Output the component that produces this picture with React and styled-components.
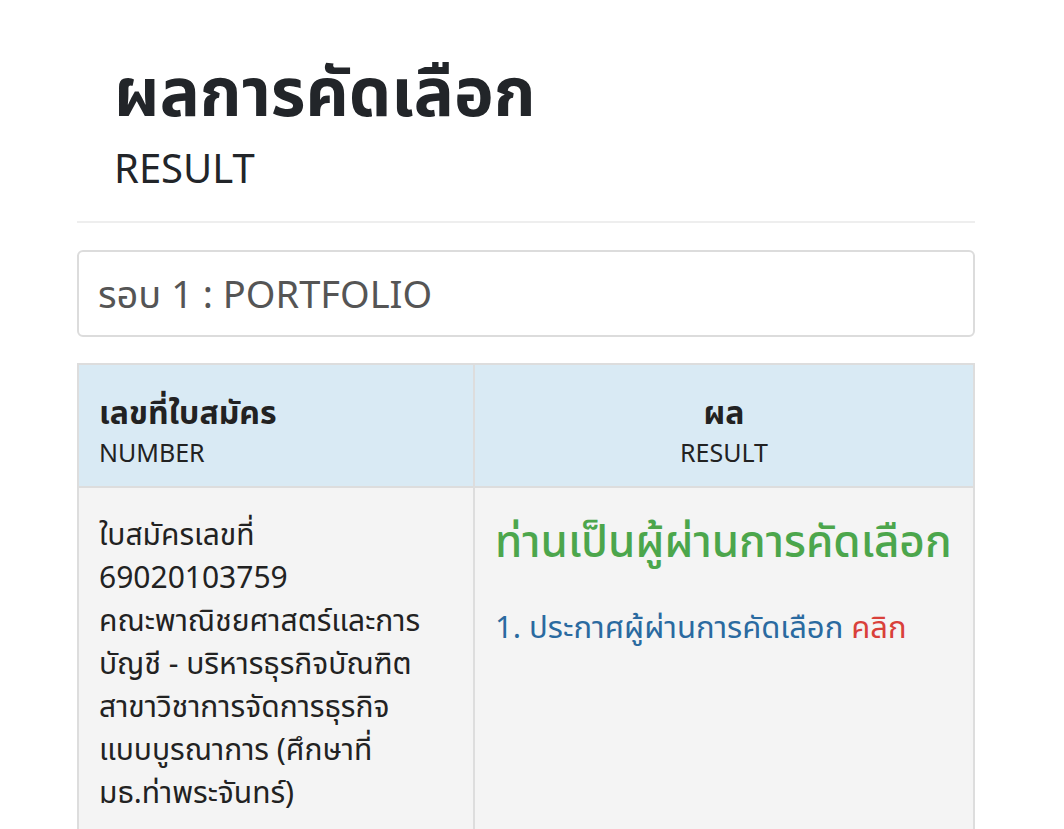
import React from 'react';
import styled, { createGlobalStyle } from 'styled-components';

const GlobalStyle = createGlobalStyle`
  html, body {
    margin: 0;
    padding: 0;
    background: #fff;
  }
  body {
    font-family: "Noto Sans", "Noto Sans Thai", "Noto Sans CJK SC", sans-serif;
    color: #333;
  }
`;

const Page = styled.div`
  width: 898px;
  padding: 0 0 0 77px;
`;

const PageHeader = styled.div`
  padding: 50px 0 29px 37px;
  border-bottom: 2px solid #eee;
  margin-bottom: 27px;
`;

const Title = styled.h1`
  margin: 0;
  font-size: 67px;
  line-height: 1.2;
  font-weight: 700;
  color: #222529;
`;

const Subtitle = styled.div`
  margin-top: 14px;
  font-size: 40px;
  line-height: 1.2;
  color: #222529;
`;

const RoundPanel = styled.div`
  border: 2px solid #dcdcdc;
  border-radius: 6px;
  padding: 19px 19px 18px;
  font-size: 38px;
  line-height: 1.2;
  color: #555;
  margin-bottom: 26px;
`;

const Table = styled.table`
  width: 100%;
  table-layout: fixed;
  border-collapse: collapse;
  border: 2px solid #ddd;
  font-size: 30px;
  line-height: 43px;
`;

const HeadCell = styled.th`
  background: #d9eaf4;
  border: 2px solid #ddd;
  padding: 26px 20px 15px;
  font-weight: 400;
  text-align: ${(p) => p.$align || 'left'};
  vertical-align: top;
`;

const HeadThai = styled.div`
  font-weight: 700;
  font-size: 32px;
  line-height: 42px;
  color: #222;
`;

const HeadEng = styled.div`
  font-size: 25px;
  line-height: 38px;
  color: #222;
`;

const BodyCell = styled.td`
  background: #f4f4f4;
  border: 2px solid #ddd;
  padding: 24px 20px 40px;
  vertical-align: top;
  color: #222;
`;

const Line = styled.span`
  display: block;
  white-space: nowrap;
`;

const Passed = styled.div`
  color: #4ca64c;
  font-size: 44px;
  font-weight: 500;
  line-height: 54px;
  margin: 1px 0 38px;
  white-space: nowrap;
`;

const NoticeLink = styled.a`
  color: #2a6aa0;
  text-decoration: none;
  font-size: 31px;
`;

const ClickLink = styled.span`
  color: #d9403a;
`;

export default function App() {
  return (
    <>
      <GlobalStyle />
      <Page>
        <PageHeader>
          <Title>ผลการคัดเลือก</Title>
          <Subtitle>RESULT</Subtitle>
        </PageHeader>

        <RoundPanel>รอบ 1 : PORTFOLIO</RoundPanel>

        <Table>
          <colgroup>
            <col style={{ width: 396 }} />
            <col />
          </colgroup>
          <thead>
            <tr>
              <HeadCell>
                <HeadThai>เลขที่ใบสมัคร</HeadThai>
                <HeadEng>NUMBER</HeadEng>
              </HeadCell>
              <HeadCell $align="center">
                <HeadThai>ผล</HeadThai>
                <HeadEng>RESULT</HeadEng>
              </HeadCell>
            </tr>
          </thead>
          <tbody>
            <tr>
              <BodyCell>
                <Line>ใบสมัครเลขที่</Line>
                <Line>69020103759</Line>
                <Line>คณะพาณิชยศาสตร์และการ</Line>
                <Line>บัญชี - บริหารธุรกิจบัณฑิต</Line>
                <Line>สาขาวิชาการจัดการธุรกิจ</Line>
                <Line>แบบบูรณาการ (ศึกษาที่</Line>
                <Line>มธ.ท่าพระจันทร์)</Line>
              </BodyCell>
              <BodyCell>
                <Passed>ท่านเป็นผู้ผ่านการคัดเลือก</Passed>
                <NoticeLink href="#">
                  1. ประกาศผู้ผ่านการคัดเลือก <ClickLink>คลิก</ClickLink>
                </NoticeLink>
              </BodyCell>
            </tr>
          </tbody>
        </Table>
      </Page>
    </>
  );
}
